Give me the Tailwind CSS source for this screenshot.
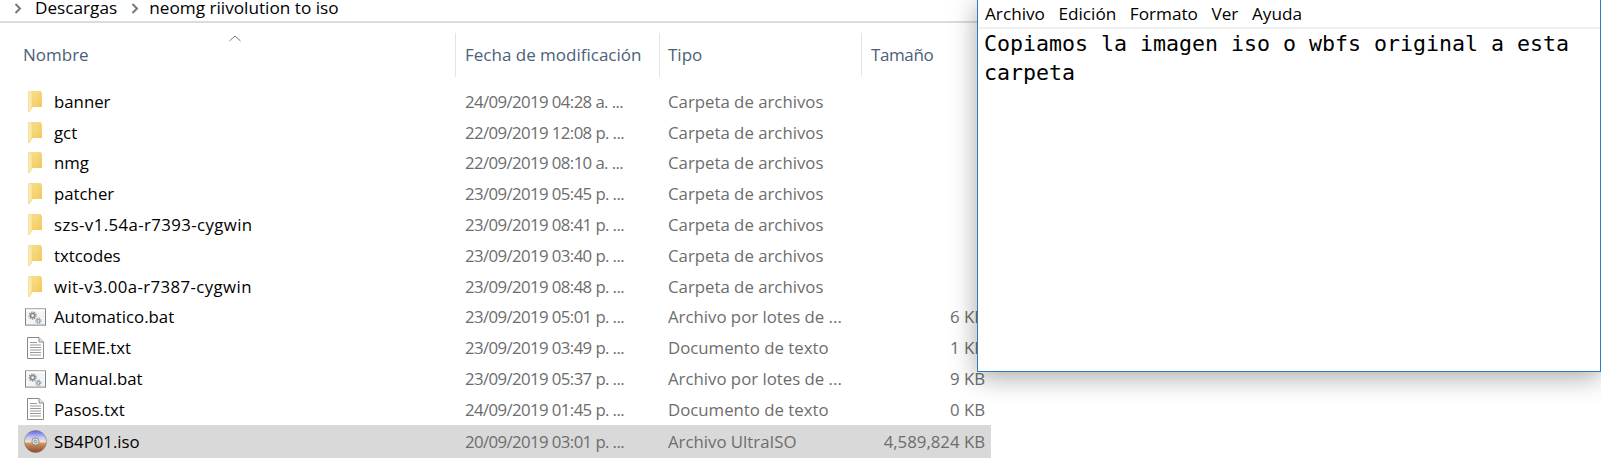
<!DOCTYPE html>
<html lang="es">
  <head>
    <meta charset="UTF-8" />
    <title>neomg riivolution to iso</title>
    <script src="https://cdn.jsdelivr.net/npm/@tailwindcss/browser@4"></script>
  </head>
  <body class="bg-white font-['Open_Sans',sans-serif] text-[16.8px] overflow-hidden">
    <svg class="absolute h-0 w-0">
      <defs>
        <linearGradient id="gold" x1="0" y1="0" x2="1" y2="1">
          <stop offset="0" stop-color="#f8e08f" />
          <stop offset="1" stop-color="#f2c75a" />
        </linearGradient>
        <linearGradient id="disc" x1="0" y1="0" x2="0" y2="1">
          <stop offset="0" stop-color="#5f63dc" />
          <stop offset="0.32" stop-color="#c3c7f5" />
          <stop offset="0.5" stop-color="#f2e4d2" />
          <stop offset="0.6" stop-color="#cf9160" />
          <stop offset="1" stop-color="#8a4a24" />
        </linearGradient>
      </defs>
      <symbol id="folder" viewBox="0 0 14 21">
        <path d="M4 0H13V1.5H14V16H4Z" fill="url(#gold)" />
        <path d="M0 1L4 0V17L1 21L0 20Z" fill="#fbe9ae" stroke="#e8c566" stroke-width="0.5" />
      </symbol>
      <symbol id="bat" viewBox="0 0 22 18">
        <rect x="0.5" y="0.5" width="21" height="17" fill="#f4f4f4" stroke="#7f7f7f" />
        <rect x="1" y="1" width="20" height="2" fill="#fff" />
        <circle cx="8" cy="7.5" r="2.2" fill="none" stroke="#8a8a8a" stroke-width="1.6" />
        <circle cx="8" cy="7.5" r="3.6" fill="none" stroke="#8a8a8a" stroke-width="1.4" stroke-dasharray="1.4 1.1" />
        <circle cx="14" cy="13" r="1.6" fill="none" stroke="#8ea3b5" stroke-width="1.3" />
        <circle cx="14" cy="13" r="2.8" fill="none" stroke="#8ea3b5" stroke-width="1.2" stroke-dasharray="1.2 1" />
      </symbol>
      <symbol id="txt" viewBox="0 0 17 22">
        <path d="M0.5 0.5H12L16.5 5V21.5H0.5Z" fill="#fff" stroke="#8a8a8a" />
        <path d="M12 0.5V5H16.5" fill="#e6e6e6" stroke="#8a8a8a" />
        <path d="M3 5.5H10M3 8H14M3 10.5H14M3 13H14M3 15.5H14M3 18H14" stroke="#999" />
      </symbol>
      <symbol id="iso" viewBox="0 0 23 23">
        <circle cx="11.5" cy="11.5" r="11" fill="url(#disc)" stroke="#777" stroke-width="0.6" />
        <circle cx="11.5" cy="11.5" r="3.6" fill="#e9e9e9" stroke="#777" stroke-width="0.8" />
        <circle cx="11.5" cy="11.5" r="1.5" fill="#d6d6d6" stroke="#666" stroke-width="0.6" />
      </symbol>
    </svg>

    <div class="relative h-[473px] w-[1601px] overflow-hidden">
      <!-- breadcrumb -->
      <div class="flex h-[23px] items-start border-b-2 border-[#dcdcdc] text-[17.2px] leading-[16px] text-black">
        <svg class="ml-[14px] mr-[13px] mt-[3px] h-[11px] w-2" viewBox="0 0 8 11"><path d="M1.5 1L6 5.5L1.5 10" fill="none" stroke="#777" stroke-width="2" /></svg>
        <span>Descargas</span>
        <svg class="ml-[14px] mr-[10px] mt-[3px] h-[11px] w-2" viewBox="0 0 8 11"><path d="M1.5 1L6 5.5L1.5 10" fill="none" stroke="#777" stroke-width="2" /></svg>
        <span>neomg riivolution to iso</span>
      </div>

      <!-- column headers -->
      <div class="relative mt-[10px] ml-[18px] grid h-[42px] w-[973px] grid-cols-[437px_204px_202px_130px] items-center text-[17px] text-[#4c607a]">
        <div class="pl-[5px]">Nombre</div>
        <div class="h-full border-l border-[#e5e5e5] pl-[9px] leading-[44px]">Fecha de modificación</div>
        <div class="h-full border-l border-[#e5e5e5] pl-[8px] leading-[44px]">Tipo</div>
        <div class="h-full border-l border-[#e5e5e5] pl-[9px] leading-[44px] tracking-[-0.4px]">Tamaño</div>
        <svg class="absolute left-[211px] top-[2px] h-[7px] w-[12px]" viewBox="0 0 12 7"><path d="M0.5 6L6 1L11.5 6" fill="none" stroke="#777" /></svg>
      </div>

      <!-- rows -->
      <div class="mt-[11px] ml-[18px] w-[973px] text-[#6d6d6d]">
        <div class="grid h-[30.8px] grid-cols-[437px_204px_202px_130px] items-center">
          <div class="flex items-center text-black"><svg class="ml-[10px] mr-3 h-[21px] w-[14px]"><use href="#folder" /></svg>banner</div>
          <div class="pl-[10px] tracking-[-0.6px]">24/09/2019 04:28 a. ...</div>
          <div class="pl-[9px]">Carpeta de archivos</div>
          <div></div>
        </div>
        <div class="grid h-[30.8px] grid-cols-[437px_204px_202px_130px] items-center">
          <div class="flex items-center text-black"><svg class="ml-[10px] mr-3 h-[21px] w-[14px]"><use href="#folder" /></svg>gct</div>
          <div class="pl-[10px] tracking-[-0.6px]">22/09/2019 12:08 p. ...</div>
          <div class="pl-[9px]">Carpeta de archivos</div>
          <div></div>
        </div>
        <div class="grid h-[30.8px] grid-cols-[437px_204px_202px_130px] items-center">
          <div class="flex items-center text-black"><svg class="ml-[10px] mr-3 h-[21px] w-[14px]"><use href="#folder" /></svg>nmg</div>
          <div class="pl-[10px] tracking-[-0.6px]">22/09/2019 08:10 a. ...</div>
          <div class="pl-[9px]">Carpeta de archivos</div>
          <div></div>
        </div>
        <div class="grid h-[30.8px] grid-cols-[437px_204px_202px_130px] items-center">
          <div class="flex items-center text-black"><svg class="ml-[10px] mr-3 h-[21px] w-[14px]"><use href="#folder" /></svg>patcher</div>
          <div class="pl-[10px] tracking-[-0.6px]">23/09/2019 05:45 p. ...</div>
          <div class="pl-[9px]">Carpeta de archivos</div>
          <div></div>
        </div>
        <div class="grid h-[30.8px] grid-cols-[437px_204px_202px_130px] items-center">
          <div class="flex items-center text-black"><svg class="ml-[10px] mr-3 h-[21px] w-[14px]"><use href="#folder" /></svg><span class="tracking-[0.4px]">szs-v1.54a-r7393-cygwin</span></div>
          <div class="pl-[10px] tracking-[-0.6px]">23/09/2019 08:41 p. ...</div>
          <div class="pl-[9px]">Carpeta de archivos</div>
          <div></div>
        </div>
        <div class="grid h-[30.8px] grid-cols-[437px_204px_202px_130px] items-center">
          <div class="flex items-center text-black"><svg class="ml-[10px] mr-3 h-[21px] w-[14px]"><use href="#folder" /></svg>txtcodes</div>
          <div class="pl-[10px] tracking-[-0.6px]">23/09/2019 03:40 p. ...</div>
          <div class="pl-[9px]">Carpeta de archivos</div>
          <div></div>
        </div>
        <div class="grid h-[30.8px] grid-cols-[437px_204px_202px_130px] items-center">
          <div class="flex items-center text-black"><svg class="ml-[10px] mr-3 h-[21px] w-[14px]"><use href="#folder" /></svg><span class="tracking-[0.4px]">wit-v3.00a-r7387-cygwin</span></div>
          <div class="pl-[10px] tracking-[-0.6px]">23/09/2019 08:48 p. ...</div>
          <div class="pl-[9px]">Carpeta de archivos</div>
          <div></div>
        </div>
        <div class="grid h-[30.8px] grid-cols-[437px_204px_202px_130px] items-center">
          <div class="flex items-center text-black"><svg class="ml-[7px] mr-[8px] h-[18px] w-[21px]"><use href="#bat" /></svg>Automatico.bat</div>
          <div class="pl-[10px] tracking-[-0.6px]">23/09/2019 05:01 p. ...</div>
          <div class="pl-[9px]">Archivo por lotes de ...</div>
          <div class="pr-[6px] text-right">6 KB</div>
        </div>
        <div class="grid h-[30.8px] grid-cols-[437px_204px_202px_130px] items-center">
          <div class="flex items-center text-black"><svg class="ml-[9px] mr-[10px] h-[22px] w-[17px]"><use href="#txt" /></svg>LEEME.txt</div>
          <div class="pl-[10px] tracking-[-0.6px]">23/09/2019 03:49 p. ...</div>
          <div class="pl-[9px]">Documento de texto</div>
          <div class="pr-[6px] text-right">1 KB</div>
        </div>
        <div class="grid h-[30.8px] grid-cols-[437px_204px_202px_130px] items-center">
          <div class="flex items-center text-black"><svg class="ml-[7px] mr-[8px] h-[18px] w-[21px]"><use href="#bat" /></svg>Manual.bat</div>
          <div class="pl-[10px] tracking-[-0.6px]">23/09/2019 05:37 p. ...</div>
          <div class="pl-[9px]">Archivo por lotes de ...</div>
          <div class="pr-[6px] text-right">9 KB</div>
        </div>
        <div class="grid h-[30.8px] grid-cols-[437px_204px_202px_130px] items-center">
          <div class="flex items-center text-black"><svg class="ml-[9px] mr-[10px] h-[22px] w-[17px]"><use href="#txt" /></svg>Pasos.txt</div>
          <div class="pl-[10px] tracking-[-0.6px]">24/09/2019 01:45 p. ...</div>
          <div class="pl-[9px]">Documento de texto</div>
          <div class="pr-[6px] text-right">0 KB</div>
        </div>
        <div class="grid h-[33px] grid-cols-[437px_204px_202px_130px] items-center bg-[#d9d9d9]">
          <div class="flex items-center text-black"><svg class="ml-[6px] mr-[7px] h-[23px] w-[23px]"><use href="#iso" /></svg>SB4P01.iso</div>
          <div class="pl-[10px] tracking-[-0.6px]">20/09/2019 03:01 p. ...</div>
          <div class="pl-[9px]">Archivo UltraISO</div>
          <div class="pr-[6px] text-right">4,589,824 KB</div>
        </div>
      </div>

      <!-- notepad window -->
      <div class="absolute left-[977px] top-0 flex h-[372px] w-[624px] flex-col border border-t-0 border-[#2b7cc4] bg-white shadow-[0_5px_25px_rgba(0,0,0,0.35)]">
        <div class="flex h-[27px] items-center gap-[13.5px] pl-[7px] text-[17.2px] leading-[27px] text-black">
          <span>Archivo</span><span>Edición</span><span>Formato</span><span>Ver</span><span>Ayuda</span>
        </div>
        <div class="h-[2px] bg-[#f0f0f0]"></div>
        <p class="pl-[6px] pt-[1px] pr-[10px] font-['DejaVu_Sans_Mono',monospace] text-[21.6px] leading-[28.6px] text-black">Copiamos la imagen iso o wbfs original a esta carpeta</p>
      </div>
    </div>
  </body>
</html>
